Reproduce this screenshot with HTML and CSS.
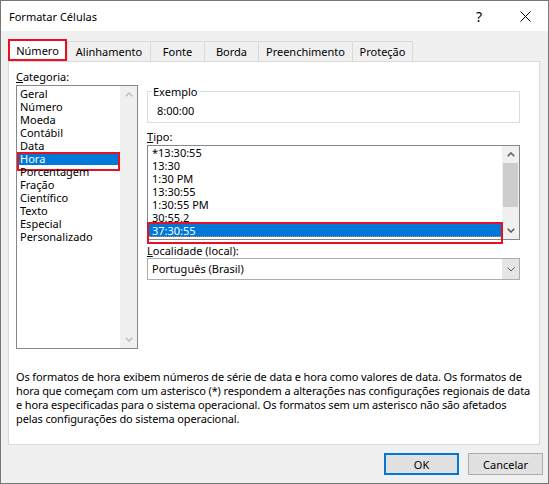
FILE: index.html
```html
<!DOCTYPE html>
<html>
<head>
<meta charset="utf-8">
<link rel="stylesheet" href="styles.css">
</head>
<body>
<div class="window">
  <div class="titlebar">
    <span class="title">Formatar Células</span>
    <span class="help">?</span>
    <span class="close"><svg width="11" height="11" viewBox="0 0 11 11"><path d="M0.5 0.5 L10.5 10.5 M10.5 0.5 L0.5 10.5" stroke="#000" stroke-width="1" fill="none"/></svg></span>
  </div>
  <div class="content">
    <div class="tabs">
      <div class="tab active w-num">Número</div>
      <div class="tab w-ali">Alinhamento</div>
      <div class="tab w-fon">Fonte</div>
      <div class="tab w-bor">Borda</div>
      <div class="tab w-pre">Preenchimento</div>
      <div class="tab w-pro last">Proteção</div>
    </div>
    <div class="panel">
      <div class="cols">
        <div class="leftcol">
          <div class="label"><u>C</u>ategoria:</div>
          <div class="listbox cat">
            <div class="items">
              <div class="item">Geral</div>
              <div class="item">Número</div>
              <div class="item">Moeda</div>
              <div class="item">Contábil</div>
              <div class="item">Data</div>
              <div class="item sel">Hora</div>
              <div class="item">Porcentagem</div>
              <div class="item">Fração</div>
              <div class="item">Científico</div>
              <div class="item">Texto</div>
              <div class="item">Especial</div>
              <div class="item">Personalizado</div>
            </div>
            <div class="vscroll disabled">
              <div class="sbtn"><svg width="8" height="5" viewBox="0 0 8 5"><path d="M0.7 4.3 L4 1 L7.3 4.3" fill="none" stroke-width="1.5"/></svg></div>
              <div class="track"></div>
              <div class="sbtn"><svg width="8" height="5" viewBox="0 0 8 5"><path d="M0.7 0.7 L4 4 L7.3 0.7" fill="none" stroke-width="1.5"/></svg></div>
            </div>
          </div>
        </div>
        <div class="rightcol">
          <div class="example">
            <span class="legend">Exemplo</span>
            <div class="example-value">8:00:00</div>
          </div>
          <div class="label tipo-label"><u>T</u>ipo:</div>
          <div class="listbox tipo">
            <div class="items">
              <div class="item">*13:30:55</div>
              <div class="item">13:30</div>
              <div class="item">1:30 PM</div>
              <div class="item">13:30:55</div>
              <div class="item">1:30:55 PM</div>
              <div class="item">30:55.2</div>
              <div class="item sel focus">37:30:55</div>
            </div>
            <div class="vscroll">
              <div class="sbtn"><svg width="8" height="5" viewBox="0 0 8 5"><path d="M0.7 4.3 L4 1 L7.3 4.3" fill="none" stroke-width="1.6"/></svg></div>
              <div class="track"><div class="thumb"></div></div>
              <div class="sbtn"><svg width="8" height="5" viewBox="0 0 8 5"><path d="M0.7 0.7 L4 4 L7.3 0.7" fill="none" stroke-width="1.6"/></svg></div>
            </div>
          </div>
          <div class="label loc-label"><u>L</u>ocalidade (local):</div>
          <div class="combo">
            <div class="combo-text">Português (Brasil)</div>
            <div class="combo-btn"><svg width="8" height="5" viewBox="0 0 8 5"><path d="M0.5 0.5 L4 4 L7.5 0.5" fill="none" stroke="#5a5a5a" stroke-width="1"/></svg></div>
          </div>
        </div>
      </div>
      <div class="desc">Os formatos de hora exibem números de série de data e hora como valores de data. Os formatos de<br>hora que começam com um asterisco (*) respondem a alterações nas configurações regionais de data<br>e hora especificadas para o sistema operacional. Os formatos sem um asterisco não são afetados<br>pelas configurações do sistema operacional.</div>
    </div>
    <div class="buttons">
      <div class="btn default">OK</div>
      <div class="btn">Cancelar</div>
    </div>
  </div>
</div>
</body>
</html>
```
FILE: styles.css
```css
* { box-sizing: border-box; }
html, body { margin: 0; padding: 0; }
body {
  width: 549px;
  height: 484px;
  overflow: hidden;
  font-family: "Noto Sans", "DejaVu Sans", sans-serif;
  font-size: 11px;
  line-height: 13px;
  color: #000;
  background: #f0f0f0;
}
.window {
  width: 549px;
  height: 484px;
  border: 1px solid #767676;
  background: #f0f0f0;
  display: flex;
  flex-direction: column;
}
.titlebar {
  height: 30px;
  flex: none;
  background: #fff;
  display: flex;
  align-items: center;
  padding-left: 8px;
}
.title { flex: 1; font-size: 11px; }
.help, .close {
  width: 46px;
  height: 30px;
  display: flex;
  align-items: center;
  justify-content: center;
}
.help { font-size: 14px; }
.content {
  flex: 1;
  padding: 8px 7px 0 7px;
  display: flex;
  flex-direction: column;
}
.tabs {
  display: flex;
  align-items: flex-end;
  height: 22px;
  flex: none;
}
.tab {
  height: 20px;
  border-left: 1px solid #d9d9d9;
  border-top: 1px solid #d9d9d9;
  background: #f0f0f0;
  display: flex;
  align-items: center;
  justify-content: center;
  white-space: nowrap;
}
.tab.last { border-right: 1px solid #d9d9d9; }
.tab.active {
  height: 22px;
  background: #fff;
  border: 2px solid #e81123;
}
.w-num { width: 59px; }
.w-ali { width: 83px; }
.w-fon { width: 54px; }
.w-bor { width: 54px; }
.w-pre { width: 94px; }
.w-pro { width: 61px; }
.panel {
  width: 532px;
  height: 384px;
  flex: none;
  background: #fff;
  border: 1px solid #d9d9d9;
  padding: 8px 7px 0 7px;
}
.cols { display: flex; gap: 9px; }
.leftcol { width: 122px; }
.rightcol { width: 373px; }
.label { height: 13px; line-height: 13px; white-space: nowrap; }
.listbox {
  margin-top: 2px;
  border: 1px solid #828790;
  background: #fff;
  display: flex;
}
.cat { height: 264px; }
.cat .items { padding-top: 1px; }
.items { flex: 1; min-width: 0; }
.item {
  height: 13px;
  line-height: 13px;
  padding-left: 3px;
  white-space: nowrap;
  position: relative;
}
.tipo .item { padding-left: 4px; }
.item.sel { background: #0078d7; color: #fff; }
.item.sel::after {
  content: "";
  position: absolute;
  left: 0;
  right: 0;
  top: 0;
  height: 15px;
  border: 2px solid #e81123;
}
.tipo .item.sel::after {
  left: -1px;
  right: -1px;
  top: -2px;
  height: 18px;
}
.item.focus::before {
  content: "";
  position: absolute;
  left: 1px;
  right: 1px;
  bottom: 0;
  border-bottom: 1px dotted #c98a3a;
}
.vscroll {
  width: 17px;
  flex: none;
  background: #f0f0f0;
  display: flex;
  flex-direction: column;
}
.sbtn {
  height: 17px;
  flex: none;
  display: flex;
  align-items: center;
  justify-content: center;
}
.sbtn svg path { stroke: #606060; }
.vscroll.disabled .sbtn svg path { stroke: #bfbfbf; }
.track { flex: 1; }
.thumb {
  height: 44px;
  margin: 0 1px;
  background: #cdcdcd;
}
.example {
  margin-top: 21px;
  height: 32px;
  border: 1px solid #dcdcdc;
  position: relative;
}
.legend {
  position: absolute;
  top: -7px;
  left: 4px;
  padding: 0 1px;
  background: #fff;
  line-height: 13px;
}
.example-value { padding: 12px 0 0 9px; }
.tipo-label { margin-top: 7px; }
.tipo { height: 95px; }
.loc-label { margin-top: 4px; }
.combo {
  margin-top: 1px;
  height: 22px;
  border: 1px solid #adadad;
  display: flex;
}
.combo-text {
  flex: 1;
  padding-left: 4px;
  line-height: 20px;
}
.combo-btn {
  width: 17px;
  background: #e5e5e5;
  display: flex;
  align-items: center;
  justify-content: center;
}
.desc {
  margin-top: 21px;
  line-height: 14px;
  white-space: nowrap;
  letter-spacing: -0.12px;
}
.buttons {
  margin-top: 8px;
  margin-right: -2px;
  display: flex;
  justify-content: flex-end;
  gap: 9px;
}
.btn {
  width: 75px;
  height: 22px;
  background: #e1e1e1;
  border: 1px solid #adadad;
  display: flex;
  align-items: center;
  justify-content: center;
}
.btn.default { border: 2px solid #0078d7; }
```
